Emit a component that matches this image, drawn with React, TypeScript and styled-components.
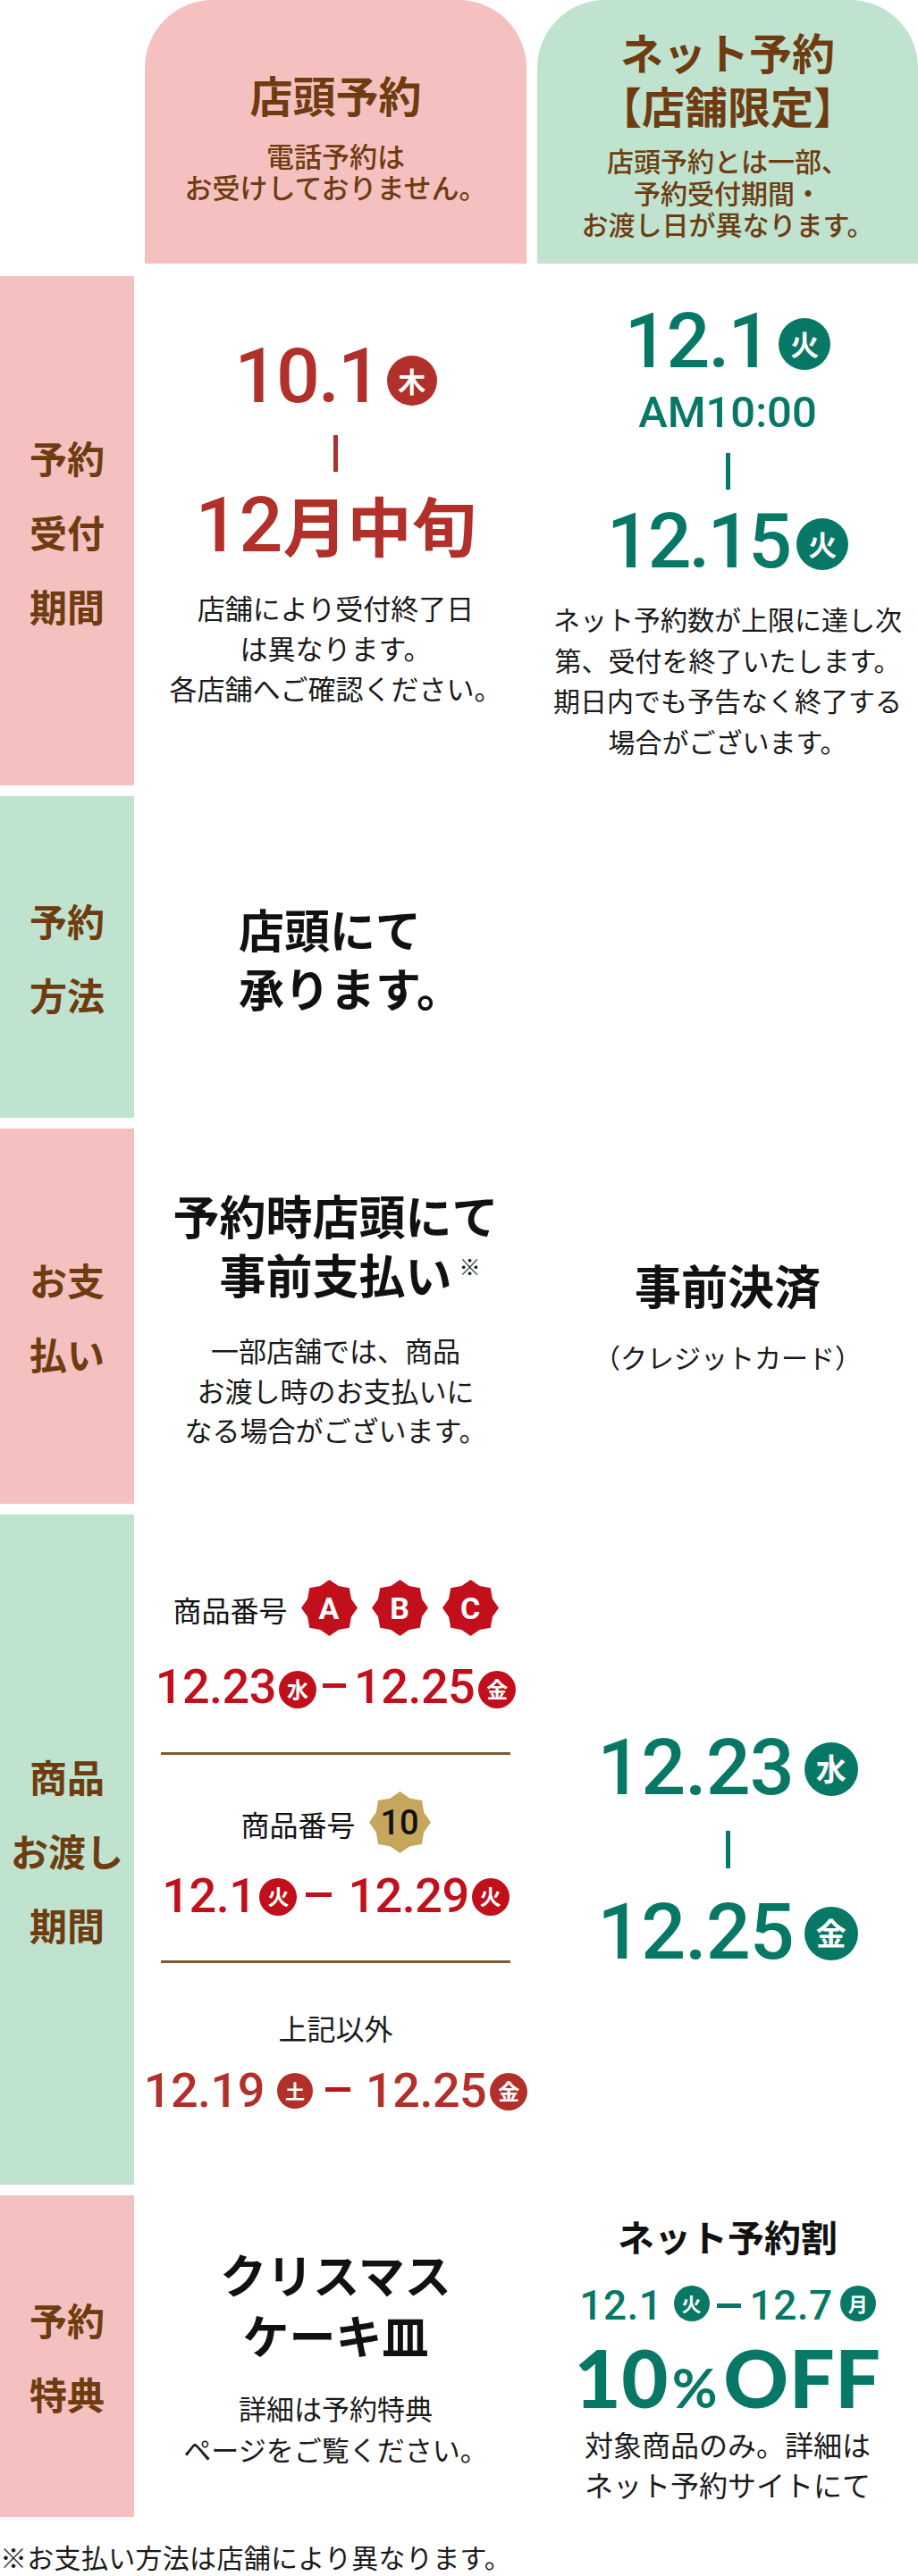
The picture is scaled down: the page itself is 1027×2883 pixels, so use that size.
import React from "react";
import styled, { createGlobalStyle } from "styled-components";

const PINK = "#f5c1c0";
const GREEN = "#bfe3cf";
const BROWN = "#6e3c10";
const TEAL = "#087866";
const BRICK = "#b1302a";
const CRIMSON = "#c10f1b";
const GOLD = "#c5a65c";
const RULE = "#7d5c2d";
const INK = "#1a1a1a";

const JP = `"Noto Sans CJK JP", "Noto Sans", sans-serif`;
const NUM = `Roboto, "Noto Sans CJK JP", sans-serif`;

const GlobalStyle = createGlobalStyle`
  html, body { margin: 0; padding: 0; background: #fff; }
  body { font-family: ${JP}; color: ${INK}; }
`;

const Page = styled.div`
  width: 1027px;
`;

const Table = styled.div`
  display: grid;
  grid-template-columns: 150px 427px 426px;
  grid-template-rows: 297px 570px 360px 420px 750px 360px;
  column-gap: 12px;
  row-gap: 12px;
`;

const Blank = styled.div``;

const Tab = styled.div<{ $bg: string; $pt: number }>`
  background: ${(p) => p.$bg};
  border-radius: 76px 76px 0 0;
  display: flex;
  flex-direction: column;
  align-items: center;
  padding-top: ${(p) => p.$pt}px;
  color: ${BROWN};
  text-align: center;
  height: 295px;
  box-sizing: border-box;
`;

const TabTitle = styled.div<{ $lh: number }>`
  font-size: 48px;
  font-weight: 700;
  line-height: ${(p) => p.$lh}px;
`;

const TabNote = styled.div<{ $size: number; $lh: number; $mt: number }>`
  font-size: ${(p) => p.$size}px;
  line-height: ${(p) => p.$lh}px;
  margin-top: ${(p) => p.$mt}px;
  font-weight: 500;
`;

const Label = styled.div<{ $bg: string }>`
  background: ${(p) => p.$bg};
  display: flex;
  align-items: center;
  justify-content: center;
  text-align: center;
  color: ${BROWN};
  font-size: 42px;
  font-weight: 700;
  line-height: 83px;
`;

const Cell = styled.div<{ $pt: number }>`
  display: flex;
  flex-direction: column;
  align-items: center;
  padding-top: ${(p) => p.$pt}px;
  text-align: center;
  min-width: 0;
`;

const DateRow = styled.div<{ $size: number; $color: string; $ls?: number; $mt?: number }>`
  display: flex;
  align-items: flex-end;
  justify-content: center;
  font-family: ${NUM};
  font-weight: 500;
  font-size: ${(p) => p.$size}px;
  line-height: 1;
  letter-spacing: ${(p) => p.$ls ?? 0}px;
  color: ${(p) => p.$color};
  margin-top: ${(p) => p.$mt ?? 0}px;
  white-space: nowrap;
`;

const Day = styled.span<{ $d: number; $bg: string; $mb?: number; $ml?: number }>`
  flex: none;
  width: ${(p) => p.$d}px;
  height: ${(p) => p.$d}px;
  margin: 0 0 ${(p) => p.$mb ?? 0}px ${(p) => p.$ml ?? 4}px;
  border-radius: 50%;
  background: ${(p) => p.$bg};
  color: #fff;
  display: inline-flex;
  align-items: center;
  justify-content: center;
  font-family: ${JP};
  font-weight: 700;
  font-size: ${(p) => Math.round(p.$d * 0.56)}px;
  line-height: 1;
  letter-spacing: 0;
  padding-bottom: 2px;
  box-sizing: border-box;
`;

const Dash = styled.span<{ $w: number; $c: string; $mb: number; $ml: number; $mr: number }>`
  flex: none;
  display: inline-block;
  width: ${(p) => p.$w}px;
  height: 5px;
  background: ${(p) => p.$c};
  margin: 0 ${(p) => p.$mr}px ${(p) => p.$mb}px ${(p) => p.$ml}px;
`;

const VLine = styled.div<{ $c: string; $mt: number; $h: number }>`
  width: 5px;
  height: ${(p) => p.$h}px;
  background: ${(p) => p.$c};
  margin-top: ${(p) => p.$mt}px;
`;

const MonthRow = styled.div<{ $mt: number }>`
  display: flex;
  align-items: baseline;
  justify-content: center;
  color: ${BRICK};
  margin-top: ${(p) => p.$mt}px;
`;

const MonthNum = styled.span`
  font-family: ${NUM};
  font-weight: 500;
  font-size: 86px;
  line-height: 1;
`;

const MonthKanji = styled.span`
  font-family: ${JP};
  font-weight: 700;
  font-size: 72px;
  line-height: 1;
`;

const Time = styled.div<{ $mt: number }>`
  font-family: ${NUM};
  font-weight: 500;
  font-size: 49px;
  line-height: 1;
  color: ${TEAL};
  margin-top: ${(p) => p.$mt}px;
`;

const Body = styled.div<{ $size: number; $lh: number; $mt: number }>`
  font-size: ${(p) => p.$size}px;
  line-height: ${(p) => p.$lh}px;
  margin-top: ${(p) => p.$mt}px;
  color: ${INK};
  white-space: nowrap;
`;

const Lead = styled.div<{ $size: number; $lh: number; $mt?: number; $align?: string }>`
  font-size: ${(p) => p.$size}px;
  line-height: ${(p) => p.$lh}px;
  font-weight: 700;
  color: #111;
  margin-top: ${(p) => p.$mt ?? 0}px;
  text-align: ${(p) => p.$align ?? "center"};
  white-space: nowrap;
`;

const LeftLead = styled(Lead)`
  align-self: flex-start;
  margin-left: 105px;
`;

const Noted = styled.span`
  position: relative;
`;

const Mark = styled.span`
  position: absolute;
  left: calc(100% + 8px);
  top: 17px;
  font-size: 24px;
  line-height: 1;
  font-weight: 400;
`;

const CodeRow = styled.div<{ $mt?: number }>`
  display: flex;
  align-items: center;
  justify-content: center;
  gap: 15px;
  margin-top: ${(p) => p.$mt ?? 0}px;
`;

const CodeText = styled.span`
  font-size: 32px;
  line-height: 1;
  color: #111;
  padding-top: 2px;
`;

const Badges = styled.div`
  display: flex;
  gap: 16px;
`;

const BadgeBox = styled.span<{ $w: number; $h: number }>`
  display: grid;
  width: ${(p) => p.$w}px;
  height: ${(p) => p.$h}px;
  & > * {
    grid-area: 1 / 1;
  }
`;

const BadgeLetter = styled.span<{ $color: string; $size: number; $weight: number }>`
  align-self: center;
  justify-self: center;
  font-family: ${NUM};
  font-weight: ${(p) => p.$weight};
  font-size: ${(p) => p.$size}px;
  line-height: 1;
  color: ${(p) => p.$color};
`;

const Rule = styled.div<{ $mt: number }>`
  width: 391px;
  height: 3px;
  background: ${RULE};
  margin-top: ${(p) => p.$mt}px;
`;

const Off = styled.div<{ $mt: number }>`
  font-family: Lato, "Noto Sans", sans-serif;
  font-weight: 900;
  font-size: 90px;
  line-height: 1;
  letter-spacing: 0.5px;
  color: ${TEAL};
  margin-top: ${(p) => p.$mt}px;
  white-space: nowrap;
`;

const Pct = styled.span`
  font-size: 62px;
  font-weight: 700;
  margin: 0 6px 0 4px;
`;

const Footnote = styled.p`
  margin: 24px 0 0;
  font-size: 30px;
  line-height: 40px;
  color: ${INK};
  letter-spacing: 0.3px;
`;

function starPoints(): string {
  const pts: string[] = [];
  for (let i = 0; i < 16; i++) {
    const a = (-90 + i * 22.5) * (Math.PI / 180);
    const r = i % 2 === 0 ? 50 : 42;
    pts.push(`${(50 + r * Math.cos(a)).toFixed(2)},${(50 + r * Math.sin(a)).toFixed(2)}`);
  }
  return pts.join(" ");
}
const STAR = starPoints();

function Badge({
  children,
  fill,
  size,
  color,
  fontSize,
  weight,
}: {
  children: React.ReactNode;
  fill: string;
  size: number;
  color: string;
  fontSize: number;
  weight: number;
}) {
  return (
    <BadgeBox $w={size} $h={size}>
      <svg width={size} height={size} viewBox="0 0 100 100" aria-hidden="true">
        <polygon points={STAR} fill={fill} />
      </svg>
      <BadgeLetter $color={color} $size={fontSize} $weight={weight}>
        {children}
      </BadgeLetter>
    </BadgeBox>
  );
}

export default function App() {
  return (
    <Page>
      <GlobalStyle />
      <Table>
        <Blank />
        <Tab $bg={PINK} $pt={77}>
          <TabTitle $lh={56}>店頭予約</TabTitle>
          <TabNote $size={31} $lh={35} $mt={23}>
            電話予約は
            <br />
            お受けしておりません。
          </TabNote>
        </Tab>
        <Tab $bg={GREEN} $pt={27}>
          <TabTitle $lh={60}>
            ネット予約
            <br />
            【店舗限定】
          </TabTitle>
          <TabNote $size={30} $lh={35.5} $mt={15}>
            店頭予約とは一部、
            <br />
            予約受付期間・
            <br />
            お渡し日が異なります。
          </TabNote>
        </Tab>

        {/* 予約受付期間 */}
        <Label $bg={PINK}>
          予約
          <br />
          受付
          <br />
          期間
        </Label>
        <Cell $pt={69}>
          <DateRow $size={86} $color={BRICK} $ls={-2}>
            <span>10.1</span>
            <Day $d={56} $bg={BRICK} $mb={10} $ml={8}>
              木
            </Day>
          </DateRow>
          <VLine $c={BRICK} $mt={23} $h={41} />
          <MonthRow $mt={17}>
            <MonthNum>12</MonthNum>
            <MonthKanji>月中旬</MonthKanji>
          </MonthRow>
          <Body $size={31} $lh={45} $mt={26}>
            店舗により受付終了日
            <br />
            は異なります。
            <br />
            各店舗へご確認ください。
          </Body>
        </Cell>
        <Cell $pt={30}>
          <DateRow $size={86} $color={TEAL} $ls={-2}>
            <span>12.1</span>
            <Day $d={58} $bg={TEAL} $mb={11} $ml={10}>
              火
            </Day>
          </DateRow>
          <Time $mt={12}>AM10:00</Time>
          <VLine $c={TEAL} $mt={21} $h={41} />
          <DateRow $size={86} $color={TEAL} $ls={-3} $mt={15}>
            <span>12.15</span>
            <Day $d={58} $bg={TEAL} $mb={11} $ml={8}>
              火
            </Day>
          </DateRow>
          <Body $size={30} $lh={45.5} $mt={21}>
            ネット予約数が上限に達し次
            <br />
            第、受付を終了いたします。
            <br />
            期日内でも予告なく終了する
            <br />
            場合がございます。
          </Body>
        </Cell>

        {/* 予約方法 */}
        <Label $bg={GREEN}>
          予約
          <br />
          方法
        </Label>
        <Cell $pt={115}>
          <LeftLead $size={51} $lh={66} $align="left">
            店頭にて
            <br />
            承ります。
          </LeftLead>
        </Cell>
        <Cell $pt={0} />

        {/* お支払い */}
        <Label $bg={PINK}>
          お支
          <br />
          払い
        </Label>
        <Cell $pt={64}>
          <Lead $size={52} $lh={66}>
            予約時店頭にて
            <br />
            <Noted>
              事前支払い<Mark>※</Mark>
            </Noted>
          </Lead>
          <Body $size={31} $lh={44.5} $mt={30}>
            一部店舗では、商品
            <br />
            お渡し時のお支払いに
            <br />
            なる場合がございます。
          </Body>
        </Cell>
        <Cell $pt={142}>
          <Lead $size={52} $lh={66}>
            事前決済
          </Lead>
          <Body $size={30} $lh={45} $mt={25}>
            （クレジットカード）
          </Body>
        </Cell>

        {/* 商品お渡し期間 */}
        <Label $bg={GREEN}>
          商品
          <br />
          お渡し
          <br />
          期間
        </Label>
        <Cell $pt={73}>
          <CodeRow>
            <CodeText>商品番号</CodeText>
            <Badges>
              <Badge fill={CRIMSON} size={63} color="#fff" fontSize={34} weight={700}>
                A
              </Badge>
              <Badge fill={CRIMSON} size={63} color="#fff" fontSize={34} weight={700}>
                B
              </Badge>
              <Badge fill={CRIMSON} size={63} color="#fff" fontSize={34} weight={700}>
                C
              </Badge>
            </Badges>
          </CodeRow>
          <DateRow $size={54} $color={CRIMSON} $ls={-0.5} $mt={30}>
            <span>12.23</span>
            <Day $d={42} $bg={CRIMSON} $mb={3} $ml={3}>
              水
            </Day>
            <Dash $w={26} $c={CRIMSON} $mb={26} $ml={7} $mr={9} />
            <span>12.25</span>
            <Day $d={42} $bg={CRIMSON} $mb={3} $ml={4}>
              金
            </Day>
          </DateRow>
          <Rule $mt={46} />
          <CodeRow $mt={41}>
            <CodeText>商品番号</CodeText>
            <Badge fill={GOLD} size={69} color="#111" fontSize={38} weight={500}>
              10
            </Badge>
          </CodeRow>
          <DateRow $size={54} $color={CRIMSON} $ls={-0.5} $mt={21}>
            <span>12.1</span>
            <Day $d={42} $bg={CRIMSON} $mb={5} $ml={4}>
              火
            </Day>
            <Dash $w={29} $c={CRIMSON} $mb={26} $ml={10} $mr={18} />
            <span>12.29</span>
            <Day $d={42} $bg={CRIMSON} $mb={5} $ml={3}>
              火
            </Day>
          </DateRow>
          <Rule $mt={45} />
          <Body $size={32} $lh={40} $mt={52}>
            上記以外
          </Body>
          <DateRow $size={54} $color={BRICK} $ls={-0.5} $mt={24}>
            <span>12.19</span>
            <Day $d={40} $bg={BRICK} $mb={7} $ml={14}>
              土
            </Day>
            <Dash $w={28} $c={CRIMSON} $mb={26} $ml={14} $mr={17} />
            <span>12.25</span>
            <Day $d={42} $bg={BRICK} $mb={5} $ml={4}>
              金
            </Day>
          </DateRow>
        </Cell>
        <Cell $pt={239}>
          <DateRow $size={88} $color={TEAL} $ls={-1}>
            <span>12.23</span>
            <Day $d={60} $bg={TEAL} $mb={12} $ml={12}>
              水
            </Day>
          </DateRow>
          <VLine $c={TEAL} $mt={27} $h={42} />
          <DateRow $size={88} $color={TEAL} $ls={-1} $mt={27}>
            <span>12.25</span>
            <Day $d={60} $bg={TEAL} $mb={12} $ml={12}>
              金
            </Day>
          </DateRow>
        </Cell>

        {/* 予約特典 */}
        <Label $bg={PINK}>
          予約
          <br />
          特典
        </Label>
        <Cell $pt={54}>
          <Lead $size={52} $lh={68}>
            クリスマス
            <br />
            ケーキ皿
          </Lead>
          <Body $size={31} $lh={46} $mt={25}>
            詳細は予約特典
            <br />
            ページをご覧ください。
          </Body>
        </Cell>
        <Cell $pt={20}>
          <Lead $size={41} $lh={50}>
            ネット予約割
          </Lead>
          <DateRow $size={46} $color={TEAL} $ls={0.5} $mt={30}>
            <span>12.1</span>
            <Day $d={40} $bg={TEAL} $mb={5} $ml={12}>
              火
            </Day>
            <Dash $w={27} $c={TEAL} $mb={20} $ml={8} $mr={10} />
            <span>12.7</span>
            <Day $d={40} $bg={TEAL} $mb={5} $ml={8}>
              月
            </Day>
          </DateRow>
          <Off $mt={12}>
            10<Pct>%</Pct>OFF
          </Off>
          <Body $size={32} $lh={45} $mt={8}>
            対象商品のみ。詳細は
            <br />
            ネット予約サイトにて
          </Body>
        </Cell>
      </Table>
      <Footnote>※お支払い方法は店舗により異なります。</Footnote>
    </Page>
  );
}
